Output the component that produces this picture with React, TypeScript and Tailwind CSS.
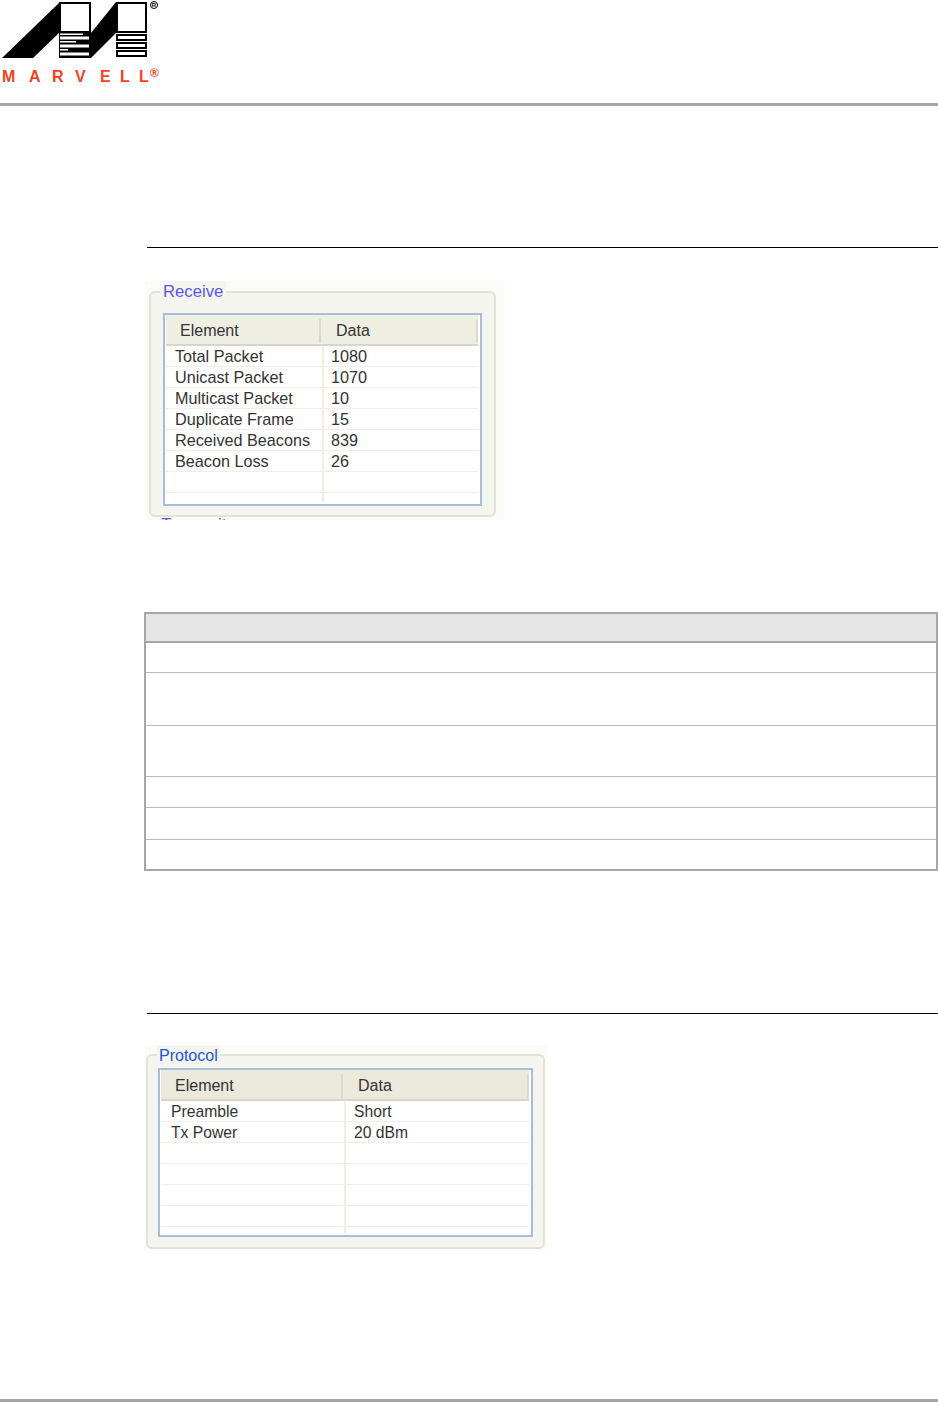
import React from "react";

function Logo() {
  return (
    <svg width="165" height="60" viewBox="0 0 165 60" className="block">
      <path d="M60 2 L2 58 L33 58 L59 33 Z" fill="#000" />
      <rect x="59" y="2" width="32" height="31" fill="#000" />
      <rect x="61" y="4" width="28" height="27" fill="#fff" />
      <rect x="59" y="33" width="32" height="25" fill="#000" />
      <path d="M116 2 L91 33 L91 58 L116 33 Z" fill="#000" />
      <rect x="116" y="2" width="31" height="31" fill="#000" />
      <rect x="118" y="4" width="27" height="27" fill="#fff" />
      <g fill="#fff">
        <rect x="60" y="33.500" width="23" height="1.500" />
        <rect x="60" y="36.500" width="29" height="3" />
        <rect x="60" y="41" width="16" height="1.500" />
        <rect x="60" y="44.500" width="29" height="3" />
        <rect x="60" y="49" width="8" height="1.500" />
        <rect x="60" y="52.500" width="29" height="3" />
      </g>
      <g fill="#fff" stroke="#000" strokeWidth="2">
        <rect x="117" y="35" width="29" height="5" />
        <rect x="117" y="43" width="29" height="5" />
        <rect x="117" y="51" width="29" height="5" />
      </g>
      <circle cx="154" cy="5" r="3.500" fill="none" stroke="#000" strokeWidth="1" />
      <text x="154" y="7" textAnchor="middle" fontSize="6" fontWeight="700" fontFamily="Liberation Sans, sans-serif" fill="#000">R</text>
    </svg>
  );
}

function ReceiveRow({ a, b }: { a: string; b: string }) {
  return (
    <div className="flex h-[21px] border-b border-[#f1efe2] text-[16.2px] leading-[20px] text-[#333]">
      <div className="w-[158px] shrink-0 border-r-2 border-[#f1efe2] pl-[9px]">{a}</div>
      <div className="pl-[7px]">{b}</div>
    </div>
  );
}

function ReceivePanel() {
  const rows: [string, string][] = [
    ["Total Packet", "1080"],
    ["Unicast Packet", "1070"],
    ["Multicast Packet", "10"],
    ["Duplicate Frame", "15"],
    ["Received Beacons", "839"],
    ["Beacon Loss", "26"],
    ["", ""],
  ];
  return (
    <div className="relative ml-[145px] mt-[33px] h-[239px] w-[360px] overflow-hidden bg-[#fbfbf7] pl-[4px] pt-[10px] font-['Liberation_Sans',sans-serif]">
      <div className="h-[226px] w-[347px] rounded-[6px] border-2 border-[#e2e2d8] bg-[#f5f5f0] pl-[12px] pt-[20px]">
        <div className="h-[193px] w-[319px] border-2 border-[#a9bcd9] bg-white pl-[1px]">
          <div className="w-[312px]">
            <div className="flex h-[31px] items-center border-b-2 border-[#d8d6c8] bg-[#efeee3] pt-[3px] text-[16px] text-[#333]">
              <div className="w-[155px] border-r-2 border-[#dcdace] pl-[14px] leading-[24px]">Element</div>
              <div className="flex-1 border-r-2 border-[#dcdace] pl-[15px] leading-[24px]">Data</div>
            </div>
            {rows.map((r, i) => (
              <ReceiveRow key={i} a={r[0]} b={r[1]} />
            ))}
            <div className="h-[9px] w-[158px] border-r-2 border-[#f1efe2]" />
          </div>
        </div>
      </div>
      <div className="absolute left-[15px] top-0 bg-[#f5f5f0] px-[3px] text-[16.7px] leading-[22px] text-[#5a55f0]">Receive</div>
      <div className="absolute left-[16px] top-[234px] text-[17px] leading-[20px] text-[#5a55f0]">Transmit</div>
    </div>
  );
}

function ProtoRow({ a, b }: { a: string; b: string }) {
  return (
    <div className="flex h-[21px] border-b border-[#f1efe2] text-[15.7px] leading-[20px] text-[#333]">
      <div className="w-[185px] shrink-0 border-r-2 border-[#f1efe2] pl-[10px] pt-[1px]">{a}</div>
      <div className="pl-[8px] pt-[1px]">{b}</div>
    </div>
  );
}

function ProtocolPanel() {
  const rows: [string, string][] = [
    ["Preamble", "Short"],
    ["Tx Power", "20 dBm"],
    ["", ""],
    ["", ""],
    ["", ""],
    ["", ""],
  ];
  return (
    <div className="relative ml-[145px] mt-[31px] h-[205px] w-[402px] bg-[#fbfbf7] pl-[1px] pt-[9px] font-['Liberation_Sans',sans-serif]">
      <div className="h-[195px] w-[399px] rounded-[6px] border-2 border-[#e2e2d8] bg-[#f5f5f0] pl-[10px] pt-[12px]">
        <div className="h-[169px] w-[375px] overflow-hidden border-2 border-[#a9bcd9] bg-white pl-[1px]">
          <div className="w-[368px]">
            <div className="flex h-[31px] items-center border-b-2 border-[#d8d6c8] bg-[#ebe9db] pt-[3px] text-[16px] text-[#333]">
              <div className="w-[182px] border-r-2 border-[#dcdace] pl-[14px] leading-[24px]">Element</div>
              <div className="flex-1 border-r-2 border-[#dcdace] pl-[15px] leading-[24px]">Data</div>
            </div>
            {rows.map((r, i) => (
              <ProtoRow key={i} a={r[0]} b={r[1]} />
            ))}
            <div className="h-[6px] w-[185px] border-r-2 border-[#f1efe2]" />
          </div>
        </div>
      </div>
      <div className="absolute left-[12px] top-[1px] bg-[#f5f5f0] px-[2px] text-[16px] leading-[20px] text-[#1f55e0]">Protocol</div>
    </div>
  );
}

export default function App() {
  return (
    <div className="h-[1402px] w-[938px] overflow-hidden bg-white">
      <div className="h-[106px] border-b-[3px] border-[#a6a6a6]">
        <Logo />
        <div className="relative mt-[10px] pl-[2px] font-['Liberation_Sans',sans-serif] text-[16px] font-bold leading-[14px] text-[#f5421c]">
          <span className="tracking-[13.7px]">M</span>
          <span className="tracking-[11.4px]">A</span>
          <span className="tracking-[11.4px]">R</span>
          <span className="tracking-[14.3px]">V</span>
          <span className="tracking-[9.3px]">E</span>
          <span className="tracking-[9.2px]">L</span>
          <span>L</span>
          <span className="absolute left-[150px] top-[-3px] text-[12px] leading-[12px]">®</span>
        </div>
      </div>
      <div className="ml-[147px] mt-[141px] h-px bg-black" />
      <ReceivePanel />
      <div className="ml-[144px] mt-[92px] h-[259px] w-[794px] border-2 border-[#a6a6a6]">
        <div className="h-[29px] border-b-2 border-[#a6a6a6] bg-[#e5e5e5]" />
        <div className="h-[30px] border-b border-[#bdbdbd]" />
        <div className="h-[53px] border-b border-[#bdbdbd]" />
        <div className="h-[51px] border-b border-[#bdbdbd]" />
        <div className="h-[31px] border-b border-[#bdbdbd]" />
        <div className="h-[32px] border-b border-[#bdbdbd]" />
        <div className="h-[29px]" />
      </div>
      <div className="ml-[147px] mt-[142px] h-px bg-black" />
      <ProtocolPanel />
      <div className="mt-[149px] h-[3px] bg-[#a6a6a6]" />
    </div>
  );
}
